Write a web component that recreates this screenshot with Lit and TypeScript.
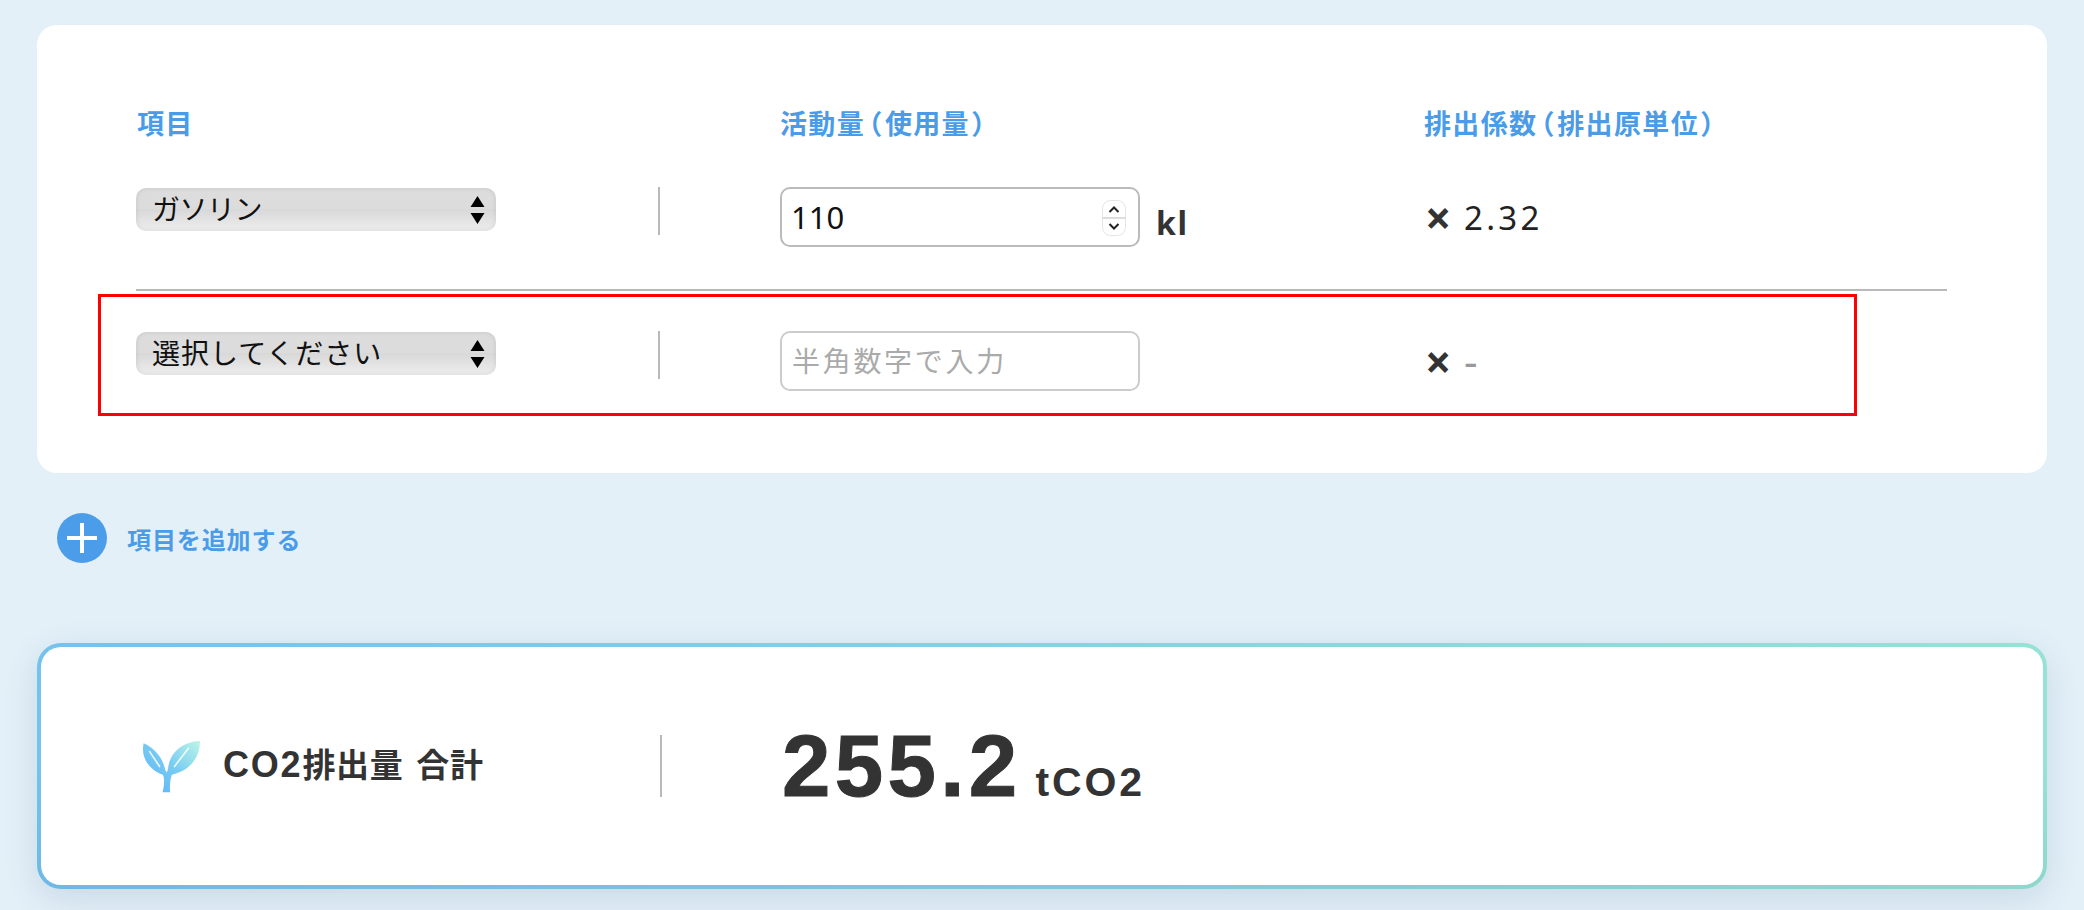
import { LitElement, html, css } from "lit";
import { customElement } from "lit/decorators.js";

const SANS = css`"Liberation Sans", "Noto Sans CJK JP", sans-serif`;
const UI = css`"Noto Sans", "Noto Sans CJK JP", sans-serif`;

@customElement("app-root")
export class AppRoot extends LitElement {
  static styles = css`
    :host { display: block; width: 2084px; height: 910px; overflow: hidden; background: #e3f0f8; font-family: ${SANS}; color: #333; }
    .page { display: flex; flex-direction: column; padding: 25px 37px 0; box-sizing: border-box; width: 2084px; }
    .card { background: #fff; border-radius: 20px; height: 448px; box-sizing: border-box; padding: 0 100px 0 99px; }
    .grid { display: grid; grid-template-columns: 644px 644px 1fr; }
    .head { padding-top: 80px; height: 162px; box-sizing: border-box; }
    .head div { color: #4a9ce8; font-size: 27px; font-weight: 700; letter-spacing: 0.05em; line-height: 40px; }
    .head div:first-child { padding-left: 1px; }
    .head .p { font-feature-settings: "palt"; margin: 0 2.5px; }
    .row { padding-bottom: 42px; border-bottom: 2px solid #b9b9b9; box-sizing: content-box; height: 60px; }
    .row.last { border-bottom: 0; padding-top: 40px; padding-bottom: 0; position: relative; }
    .c1 { display: flex; align-items: flex-start; }
    .select { width: 360px; height: 43px; margin-top: 1px; box-sizing: border-box; border-radius: 10px; display: flex; align-items: center; justify-content: space-between;
      padding: 0 11px 0 16px; background: linear-gradient(#dddddd 0, #dcdcdc 48%, #d8d8d8 50%, #eeeeee 100%); box-shadow: inset 0 0 5px rgba(0,0,0,.1); font-family: ${UI}; font-size: 28px; color: #111; line-height: 43px; white-space: nowrap; }
    .select svg { display: block; flex: none; }
    .select .kana { letter-spacing: -0.5px; }
    .select .wide { letter-spacing: 1px; }
    .vline { width: 2px; height: 48px; background: #b9b9b9; margin-left: 162px; flex: none; }
    .c2 { display: flex; align-items: flex-start; }
    .field { position: relative; width: 360px; height: 60px; flex: none; }
    input { width: 100%; height: 100%; box-sizing: border-box; border: 2px solid #bbb; border-radius: 10px; background: #fff; padding: 0 9px; margin: 0; font-family: ${UI}; font-size: 31px; color: #111; outline: none; }
    input.empty { border-color: #ccc; font-size: 28px; letter-spacing: 2.7px; padding: 0 10px; }
    input::placeholder { color: #aaa; opacity: 1; }
    .spin { position: absolute; right: 14px; top: 13px; }
    .unit { font-family: ${UI}; font-weight: 700; font-size: 32px; letter-spacing: 0.05em; line-height: 60px; margin: 6px 0 0 16px; color: #333; }
    .factor { display: flex; align-items: center; height: 60px; font-family: ${UI}; font-size: 33px; letter-spacing: 0.1em; color: #222; padding-left: 1px; }
    .factor b { font-size: 46px; letter-spacing: 0; font-weight: 700; margin-right: 13px; width: 26px; display: inline-block; line-height: 1; color: #333; }
    .dash { color: #999; font-size: 42px; line-height: 1; }
    .mark { position: absolute; left: -38px; top: 3px; width: 1759px; height: 122px; box-sizing: border-box; border: 3px solid #f00; pointer-events: none; }
    .add { display: flex; align-items: center; gap: 20px; margin: 40px 0 0 20px; height: 50px; }
    .plus { width: 50px; height: 50px; border-radius: 50%; background: #4b9de9; display: flex; align-items: center; justify-content: center; flex: none; }
    .addtext { color: #4a9ce8; font-size: 24px; font-weight: 700; font-family: ${UI}; letter-spacing: 0.9px; }
    .total { margin-top: 80px; height: 246px; box-sizing: border-box; border: 4px solid transparent; border-radius: 24px;
      background: linear-gradient(#fff, #fff) padding-box, linear-gradient(rgba(0,40,80,0) 50%, rgba(0,40,80,.06)) border-box, linear-gradient(90deg, #74c2ee, #96e2d5) border-box;
      box-shadow: 0 10px 34px rgba(40, 80, 120, .14); display: flex; align-items: center; padding-left: 101px; }
    .total svg { display: block; flex: none; }
    .tlabel { font-size: 33px; font-weight: 700; letter-spacing: 0.02em; word-spacing: 3px; margin: 0 0 6px 22px; width: 437px; white-space: nowrap; flex: none; color: #333; }
    .tlabel span { font-size: 36px; letter-spacing: 0.05em; }
    .tline { width: 2px; height: 62px; background: #b9b9b9; flex: none; }
    .value { margin: 0 0 2px 120px; font-size: 87px; font-weight: 700; letter-spacing: 0.05em; line-height: 1; white-space: nowrap; color: #333; -webkit-text-stroke: 1px #333; }
    .value small { font-size: 41px; margin-left: 14px; letter-spacing: 0.07em; -webkit-text-stroke: 0; }
  `;

  private arrows() {
    return html`<svg width="15" height="28" viewBox="0 0 15 28"><path d="M7.5 0 L14.5 11 L.5 11 Z M.5 17 L14.5 17 L7.5 28 Z" fill="#000"/></svg>`;
  }

  render() {
    return html`
      <div class="page">
        <section class="card">
          <div class="grid head">
            <div>項目</div>
            <div>活動量<span class="p">（</span>使用量<span class="p">）</span></div>
            <div>排出係数<span class="p">（</span>排出原単位<span class="p">）</span></div>
          </div>
          <div class="grid row">
            <div class="c1"><div class="select"><span class="kana">ガソリン</span>${this.arrows()}</div><div class="vline"></div></div>
            <div class="c2">
              <div class="field">
                <input type="text" .value=${"110"} />
                <svg class="spin" width="24" height="36" viewBox="0 0 24 36">
                  <rect x=".5" y=".5" width="23" height="35" rx="8" fill="#fff" stroke="#e4e4e4"/>
                  <path d="M.5 18 H23.5" stroke="#ddd" stroke-width="2"/>
                  <path d="M7.5 12 L12 7.5 L16.5 12 M7.5 24 L12 28.5 L16.5 24" fill="none" stroke="#222" stroke-width="2"/>
                </svg>
              </div>
              <div class="unit">kl</div>
            </div>
            <div class="factor"><b>×</b>2.32</div>
          </div>
          <div class="grid row last">
            <div class="c1"><div class="select"><span class="wide">選択してください</span>${this.arrows()}</div><div class="vline"></div></div>
            <div class="c2"><div class="field"><input class="empty" type="text" placeholder="半角数字で入力" /></div></div>
            <div class="factor"><b>×</b><span class="dash">-</span></div>
            <div class="mark"></div>
          </div>
        </section>
        <div class="add">
          <div class="plus"><svg width="30" height="30" viewBox="0 0 30 30"><path d="M15 0 V30 M0 15 H30" stroke="#fff" stroke-width="4"/></svg></div>
          <div class="addtext">項目を追加する</div>
        </div>
        <section class="total">
          <svg width="59" height="53" viewBox="66 60 176 160">
            <defs><linearGradient id="leaf" x1="0.1" y1="0.8" x2="1" y2="0"><stop offset="0" stop-color="#62b8f6"/><stop offset=".45" stop-color="#79cdf3"/><stop offset="1" stop-color="#bdf6e6"/></linearGradient></defs>
            <path fill="url(#leaf)" d="M70 70 C95 80 127 108 135 150 L139 158 L143 150 C147 100 185 65 240 63 C240 110 215 150 155 165 C150 180 148 200 150 218 L127 218 C133 195 133 175 128 165 C85 150 60 110 70 70 Z"/>
            <path d="M88 95 L118 140 M205 85 L163 140" stroke="#fff" stroke-opacity=".85" stroke-width="5" stroke-linecap="round" fill="none"/>
          </svg>
          <div class="tlabel"><span>CO2</span>排出量 合計</div>
          <div class="tline"></div>
          <div class="value">255.2<small>tCO2</small></div>
        </section>
      </div>
    `;
  }
}
